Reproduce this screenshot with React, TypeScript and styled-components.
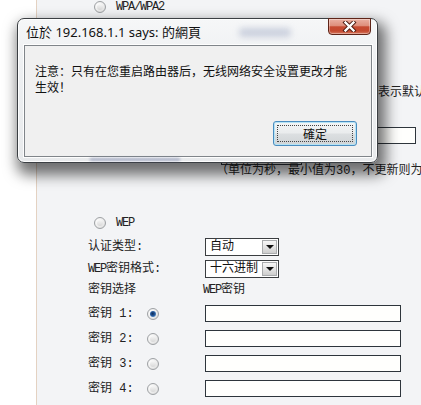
import React from 'react';
import styled, { createGlobalStyle } from 'styled-components';

const GlobalStyle = createGlobalStyle`
  html, body {
    margin: 0;
    padding: 0;
    background: #ffffff;
  }
  body {
    font-family: "Liberation Mono", "Noto Sans CJK SC", monospace;
    font-size: 12px;
    color: #222;
  }
`;

const Page = styled.div`
  position: relative;
  display: flex;
  width: 421px;
  height: 405px;
  overflow: hidden;
`;

const Gutter = styled.div`
  width: 36px;
  flex-shrink: 0;
  background: #ffffff;
  border-right: 1px solid #e4d2c2;
`;

const Content = styled.div`
  flex: 1;
  display: flex;
  flex-direction: column;
  padding-left: 51px;
  background: #f3f4f6;
`;

const Row = styled.div<{ $h: number; $align?: string }>`
  display: flex;
  align-items: ${(p) => p.$align ?? 'center'};
  height: ${(p) => p.$h}px;
  line-height: 14px;
  white-space: nowrap;
`;

const RadioRow = styled(Row)`
  padding-left: 6px;
  gap: 10px;
`;

const Label = styled.span<{ $w: number }>`
  width: ${(p) => p.$w}px;
  flex-shrink: 0;
`;

const Lat = styled.span`
  letter-spacing: -1.2px;
`;

const Hint = styled.span<{ $indent: number }>`
  padding-left: ${(p) => p.$indent}px;
  line-height: 12px;
`;

const Radio = styled.span<{ $checked?: boolean }>`
  position: relative;
  width: 12px;
  height: 12px;
  box-sizing: border-box;
  flex-shrink: 0;
  border-radius: 50%;
  border: 1px solid #9ea1a4;
  background: radial-gradient(circle at 35% 35%, #ffffff 0%, #ececec 55%, #cfcfcf 100%);

  &::after {
    content: '';
    position: absolute;
    inset: 2px;
    border-radius: 50%;
    background: ${(p) =>
      p.$checked
        ? 'radial-gradient(circle at 45% 45%, #0e2b55 0%, #23579a 45%, #7fb6e6 100%)'
        : 'linear-gradient(180deg, #f6f6f6, #d8d8d8)'};
  }
`;

const Select = styled.div<{ $w: number }>`
  display: flex;
  align-items: center;
  justify-content: space-between;
  width: ${(p) => p.$w}px;
  height: 18px;
  box-sizing: border-box;
  border: 1px solid #3a3d40;
  background: #ffffff;
  padding: 0 1px 0 4px;
  color: #111;
`;

const SelectArrow = styled.span`
  display: flex;
  align-items: center;
  justify-content: center;
  width: 15px;
  height: 14px;
  box-sizing: border-box;
  border: 1px solid #a9abad;
  background: linear-gradient(180deg, #f7f7f7 0%, #e4e4e4 50%, #cdcdcd 100%);

  &::before {
    content: '';
    border-left: 4px solid transparent;
    border-right: 4px solid transparent;
    border-top: 4px solid #111;
  }
`;

const TextBox = styled.input<{ $w: number }>`
  width: ${(p) => p.$w}px;
  height: 17px;
  box-sizing: border-box;
  margin: 0;
  padding: 0 2px;
  border: 1px solid #2e353c;
  background: #fffffd;
  font: inherit;
  outline: none;
`;

const KeyCell = styled.div`
  display: flex;
  align-items: center;
  width: 117px;
  flex-shrink: 0;
`;

const KeyName = styled.span`
  width: 59px;
`;

/* ---- alert dialog (overlay) ---- */

const Dialog = styled.div`
  position: absolute;
  left: 17px;
  top: 18px;
  width: 361px;
  height: 145px;
  box-sizing: border-box;
  display: flex;
  flex-direction: column;
  padding: 0 5px 5px 6px;
  border: 1px solid #3b3f43;
  border-radius: 7px;
  background: linear-gradient(180deg, #f6f7f8 0%, #eef0f2 30%, #e8eaec 100%);
  box-shadow: inset 0 0 0 1px rgba(255, 255, 255, 0.9),
    4px 8px 14px 4px rgba(0, 0, 0, 0.55);
  font-family: "Noto Sans", "Noto Sans CJK TC", sans-serif;
  color: #111;

  /* glass blur of the page seen through the bottom frame */
  &::after {
    content: '';
    position: absolute;
    left: 72px;
    bottom: 1px;
    width: 90px;
    height: 3px;
    background: rgba(90, 105, 150, 0.45);
    filter: blur(1.5px);
  }
`;

const TitleBar = styled.div`
  display: flex;
  align-items: flex-start;
  height: 26px;
  padding-left: 2px;
  flex-shrink: 0;
`;

const Title = styled.span`
  padding-top: 5px;
  font-size: 13px;
  line-height: 16px;
  white-space: nowrap;
`;

const GlassBlur = styled.span`
  width: 52px;
  height: 9px;
  margin: 9px 0 0 38px;
  border-radius: 4px;
  background: rgba(110, 125, 165, 0.3);
  filter: blur(3px);
`;

const CloseBtn = styled.div`
  display: flex;
  align-items: center;
  justify-content: center;
  width: 43px;
  height: 17px;
  margin: -1px 1px 0 auto;
  box-sizing: border-box;
  border: 1px solid #5e2418;
  border-radius: 0 0 4px 4px;
  background: linear-gradient(180deg, #eab0a2 0%, #de8e7b 45%, #c64a31 52%, #c4492f 80%, #d87c63 100%);
  box-shadow: inset 0 0 0 1px rgba(255, 255, 255, 0.35);
`;

const Panel = styled.div`
  flex: 1;
  display: flex;
  flex-direction: column;
  padding: 17px 14px 10px 10px;
  border: 1px solid #80858a;
  background: #f0f0f0;
  box-shadow: 0 0 0 1px rgba(255, 255, 255, 0.9);
`;

const Message = styled.div`
  font-family: "Noto Sans CJK SC", sans-serif;
  font-size: 12px;
  line-height: 16px;
  white-space: nowrap;
`;

const OkButton = styled.div`
  position: relative;
  align-self: flex-end;
  margin-top: auto;
  display: flex;
  align-items: center;
  justify-content: center;
  width: 84px;
  height: 25px;
  box-sizing: border-box;
  border: 1px solid #4a8cbf;
  border-radius: 3px;
  background: linear-gradient(180deg, #f3f5f6 0%, #eaeced 48%, #dcdfe1 52%, #d0d4d6 100%);
  box-shadow: inset 0 0 0 1px #b5e3f5;
  font-family: "Noto Sans CJK TC", sans-serif;
  font-size: 12px;
  color: #111;

  &::after {
    content: '';
    position: absolute;
    inset: 3px;
    border: 1px dotted #444;
  }
`;

const CloseIcon = () => (
  <svg width="15" height="11" viewBox="0 0 15 11">
    <path d="M3.5 1.5 L11.5 9.5 M11.5 1.5 L3.5 9.5" stroke="#4a1a10" strokeWidth="4.2" strokeLinecap="square" />
    <path d="M3.5 1.5 L11.5 9.5 M11.5 1.5 L3.5 9.5" stroke="#ffffff" strokeWidth="2.4" strokeLinecap="square" />
  </svg>
);

const keys = [1, 2, 3, 4];

const App: React.FC = () => (
  <>
    <GlobalStyle />
    <Page>
      <Gutter />
      <Content>
        <RadioRow $h={14}>
          <Radio />
          <Lat>WPA/WPA2</Lat>
        </RadioRow>
        <Row $h={28}>
          <Label $w={133}>认证类型:</Label>
          <Select $w={74}>自动<SelectArrow /></Select>
        </Row>
        <Row $h={22}>
          <Label $w={133}>加密算法:</Label>
          <Select $w={74}>AES<SelectArrow /></Select>
        </Row>
        <Row $h={18}>
          <Label $w={133}>PSK密码:</Label>
        </Row>
        <Row $h={22}>
          <Hint $indent={134}>（范围为八至六十三位，零值表示默认值）</Hint>
        </Row>
        <Row $h={20} />
        <Row $h={22}>
          <Label $w={133}>PSK密码:</Label>
          <TextBox $w={195} readOnly />
        </Row>
        <Row $h={19} $align="flex-end">
          <Label $w={133}>组密钥更新周期:</Label>
          <TextBox $w={81} readOnly />
        </Row>
        <Row $h={12}>
          <Hint $indent={128}>（单位为秒，最小值为30，不更新则为0）</Hint>
        </Row>
        <Row $h={34} />

        <RadioRow $h={24}>
          <Radio />
          <Lat>WEP</Lat>
        </RadioRow>
        <Row $h={24}>
          <Label $w={117}>认证类型:</Label>
          <Select $w={74}>自动<SelectArrow /></Select>
        </Row>
        <Row $h={20}>
          <Label $w={117}><Lat>WEP</Lat>密钥格式:</Label>
          <Select $w={74}>十六进制<SelectArrow /></Select>
        </Row>
        <Row $h={22}>
          <Label $w={115}>密钥选择</Label>
          <span><Lat>WEP</Lat>密钥</span>
        </Row>
        {keys.map((k) => (
          <Row key={k} $h={25}>
            <KeyCell>
              <KeyName>密钥 {k}:</KeyName>
              <Radio $checked={k === 1} />
            </KeyCell>
            <TextBox $w={196} readOnly />
          </Row>
        ))}
      </Content>

      <Dialog>
        <TitleBar>
          <Title>位於 192.168.1.1 says: 的網頁</Title>
          <GlassBlur />
          <CloseBtn>
            <CloseIcon />
          </CloseBtn>
        </TitleBar>
        <Panel>
          <Message>
            注意：只有在您重启路由器后，无线网络安全设置更改才能
            <br />
            生效！
          </Message>
          <OkButton>確定</OkButton>
        </Panel>
      </Dialog>
    </Page>
  </>
);

export default App;
